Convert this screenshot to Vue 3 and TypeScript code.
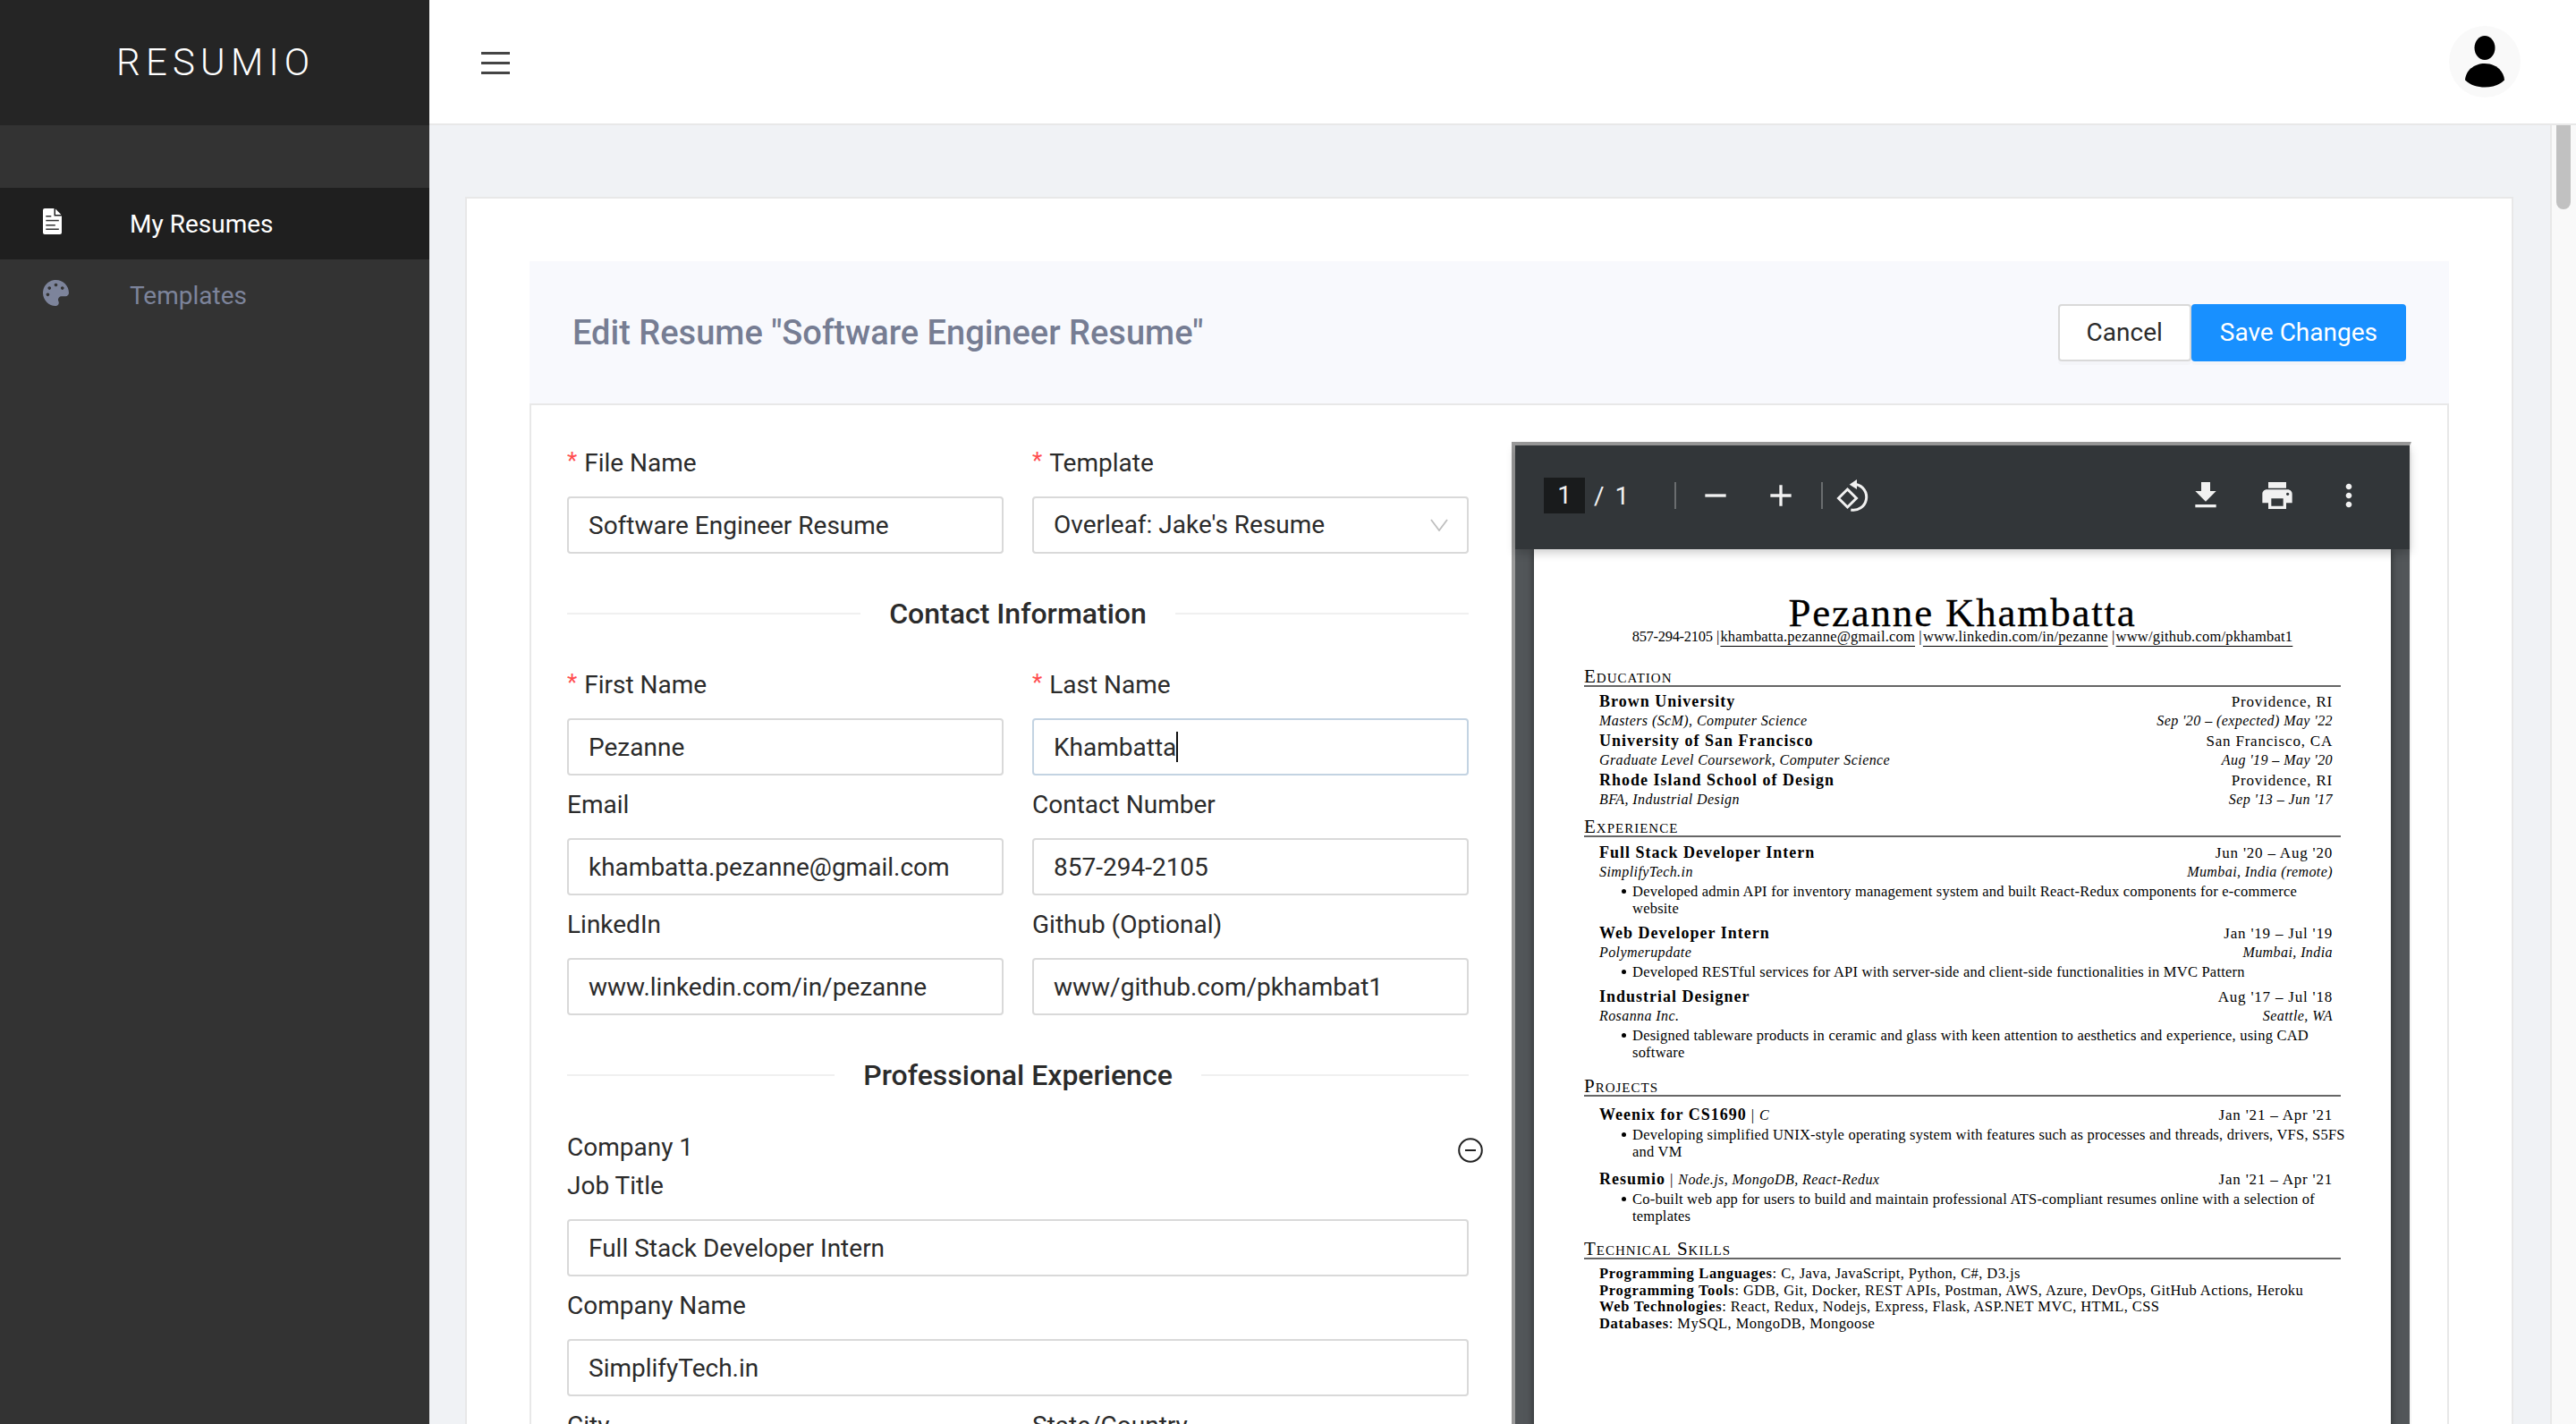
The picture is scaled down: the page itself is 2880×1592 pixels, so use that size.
<script setup lang="ts">
import { ref } from 'vue'

type Entry = {
  title: string
  tech?: string
  right: string
  sub?: string
  subRight?: string
  bullets: string[]
}

const lastName = ref('Khambatta')

const education: Entry[] = [
  { title: 'Brown University', right: 'Providence, RI', sub: 'Masters (ScM), Computer Science', subRight: "Sep '20 – (expected) May '22", bullets: [] },
  { title: 'University of San Francisco', right: 'San Francisco, CA', sub: 'Graduate Level Coursework, Computer Science', subRight: "Aug '19 – May '20", bullets: [] },
  { title: 'Rhode Island School of Design', right: 'Providence, RI', sub: 'BFA, Industrial Design', subRight: "Sep '13 – Jun '17", bullets: [] }
]

const experience: Entry[] = [
  {
    title: 'Full Stack Developer Intern', right: "Jun '20 – Aug '20", sub: 'SimplifyTech.in', subRight: 'Mumbai, India (remote)',
    bullets: ['Developed admin API for inventory management system and built React-Redux components for e-commerce website']
  },
  {
    title: 'Web Developer Intern', right: "Jan '19 – Jul '19", sub: 'Polymerupdate', subRight: 'Mumbai, India',
    bullets: ['Developed RESTful services for API with server-side and client-side functionalities in MVC Pattern']
  },
  {
    title: 'Industrial Designer', right: "Aug '17 – Jul '18", sub: 'Rosanna Inc.', subRight: 'Seattle, WA',
    bullets: ['Designed tableware products in ceramic and glass with keen attention to aesthetics and experience, using CAD software']
  }
]

const projects: Entry[] = [
  {
    title: 'Weenix for CS1690', tech: 'C', right: "Jan '21 – Apr '21",
    bullets: ['Developing simplified UNIX-style operating system with features such as processes and threads, drivers, VFS, S5FS and VM']
  },
  {
    title: 'Resumio', tech: 'Node.js, MongoDB, React-Redux', right: "Jan '21 – Apr '21",
    bullets: ['Co-built web app for users to build and maintain professional ATS-compliant resumes online with a selection of templates']
  }
]

const skills = [
  { name: 'Programming Languages', value: 'C, Java, JavaScript, Python, C#, D3.js' },
  { name: 'Programming Tools', value: 'GDB, Git, Docker, REST APIs, Postman, AWS, Azure, DevOps, GitHub Actions, Heroku' },
  { name: 'Web Technologies', value: 'React, Redux, Nodejs, Express, Flask, ASP.NET MVC, HTML, CSS' },
  { name: 'Databases', value: 'MySQL, MongoDB, Mongoose' }
]

const sections = [
  { name: 'Education', entries: education, kind: 'edu' },
  { name: 'Experience', entries: experience, kind: 'exp' },
  { name: 'Projects', entries: projects, kind: 'proj' }
]
</script>

<template>
  <div class="app">
    <aside class="sidebar">
      <div class="logo">RESUMIO</div>
      <nav class="nav">
        <a class="nav-item active">
          <svg class="nav-icon" width="21" height="29" viewBox="0 0 21 29">
            <path fill="#fff" d="M2 0h10.500v8.500h8.500V27a2 2 0 0 1-2 2H2a2 2 0 0 1-2-2V2a2 2 0 0 1 2-2z" />
            <path fill="#fff" d="M14 .6 20.400 7H14z" />
            <g fill="#333">
              <rect x="3.300" y="8" width="6" height="1.500" />
              <rect x="3.300" y="12.800" width="14.500" height="1.500" />
              <rect x="3.300" y="18" width="10.500" height="1.500" />
              <rect x="3.300" y="22.500" width="14.500" height="1.500" />
            </g>
          </svg>
          <span>My Resumes</span>
        </a>
        <a class="nav-item">
          <svg class="nav-icon" width="29" height="29" viewBox="0 0 512 512">
            <path fill="#7d849b" d="M204.300 5C104.900 24.400 24.800 104.300 5.200 203.400c-37 187 131.700 326.400 258.800 306.700 41.200-6.400 61.400-54.600 42.500-91.700-23.100-45.400 9.900-98.400 60.900-98.400h79.700c35.800 0 64.800-29.600 64.900-65.300C511.500 97.100 368.100-26.900 204.300 5zM96 320c-17.700 0-32-14.300-32-32s14.300-32 32-32 32 14.300 32 32-14.300 32-32 32zm32-128c-17.700 0-32-14.300-32-32s14.300-32 32-32 32 14.300 32 32-14.300 32-32 32zm128-64c-17.700 0-32-14.300-32-32s14.300-32 32-32 32 14.300 32 32-14.300 32-32 32zm128 64c-17.700 0-32-14.300-32-32s14.300-32 32-32 32 14.300 32 32-14.300 32-32 32z" />
          </svg>
          <span>Templates</span>
        </a>
      </nav>
    </aside>

    <div class="main">
      <header class="topbar">
        <button class="burger"><i></i><i></i><i></i></button>
        <div class="avatar">
          <svg width="46" height="58" viewBox="0 0 46 58">
            <ellipse cx="23" cy="13.500" rx="11.500" ry="13.500" fill="#000" />
            <path fill="#000" d="M23 31C11 31 1.500 39 1 49.500 7 55.500 15 57.500 23 57.500s16-2 22-8C44.500 39 35 31 23 31z" />
          </svg>
        </div>
      </header>

      <div class="scroller">
        <div class="content">
          <section class="card">
            <div class="page-head">
              <h1>Edit Resume "Software Engineer Resume"</h1>
              <div class="actions">
                <button class="btn">Cancel</button>
                <button class="btn primary">Save Changes</button>
              </div>
            </div>

            <div class="body">
              <form class="form" @submit.prevent>
                <div class="row">
                  <div class="field">
                    <label class="req">File Name</label>
                    <div class="input">Software Engineer Resume</div>
                  </div>
                  <div class="field">
                    <label class="req">Template</label>
                    <div class="input select">
                      Overleaf: Jake's Resume
                      <svg width="20" height="14" viewBox="0 0 20 14">
                        <path d="M1 1l9 12 9-12" fill="none" stroke="#bfbfbf" stroke-width="1.800" />
                      </svg>
                    </div>
                  </div>
                </div>

                <div class="divider"><span>Contact Information</span></div>

                <div class="row">
                  <div class="field">
                    <label class="req">First Name</label>
                    <div class="input">Pezanne</div>
                  </div>
                  <div class="field">
                    <label class="req">Last Name</label>
                    <div class="input focused">{{ lastName }}<span class="caret"></span></div>
                  </div>
                </div>
                <div class="row">
                  <div class="field">
                    <label>Email</label>
                    <div class="input">khambatta.pezanne@gmail.com</div>
                  </div>
                  <div class="field">
                    <label>Contact Number</label>
                    <div class="input">857-294-2105</div>
                  </div>
                </div>
                <div class="row">
                  <div class="field">
                    <label>LinkedIn</label>
                    <div class="input">www.linkedin.com/in/pezanne</div>
                  </div>
                  <div class="field">
                    <label>Github (Optional)</label>
                    <div class="input">www/github.com/pkhambat1</div>
                  </div>
                </div>

                <div class="divider"><span>Professional Experience</span></div>

                <div class="company">
                  <span>Company 1</span>
                  <svg width="28" height="28" viewBox="0 0 28 28">
                    <circle cx="14" cy="14" r="12.800" fill="none" stroke="#222" stroke-width="2" />
                    <rect x="8" y="13" width="12" height="2" fill="#222" />
                  </svg>
                </div>
                <div class="field">
                  <label>Job Title</label>
                  <div class="input">Full Stack Developer Intern</div>
                </div>
                <div class="field spaced">
                  <label>Company Name</label>
                  <div class="input">SimplifyTech.in</div>
                </div>
                <div class="row spaced">
                  <div class="field">
                    <label>City</label>
                  </div>
                  <div class="field">
                    <label>State/Country</label>
                  </div>
                </div>
              </form>

              <div class="viewer">
                <div class="toolbar">
                  <span class="page-box">1</span>
                  <span class="page-total">/ 1</span>
                  <span class="sep first"></span>
                  <svg class="tool zoom-out" viewBox="0 0 24 24"><path d="M19 13H5v-2h14v2z" /></svg>
                  <svg class="tool zoom-in" viewBox="0 0 24 24"><path d="M19 13h-6v6h-2v-6H5v-2h6V5h2v6h6v2z" /></svg>
                  <span class="sep second"></span>
                  <svg class="rotate" width="40" height="40" viewBox="0 0 40 40">
                    <path d="M12.500 13l10 10-10 10-10-10z" fill="none" stroke="#f1f1f1" stroke-width="3" />
                    <path d="M22 7.500A14.500 14.500 0 0 1 16.300 36" fill="none" stroke="#f1f1f1" stroke-width="3" />
                    <path d="M14.700 7.700 23 2v11z" fill="#f1f1f1" />
                  </svg>
                  <div class="tools-right">
                    <svg class="tool" viewBox="0 0 24 24"><path d="M19 9h-4V3H9v6H5l7 7 7-7zM5 18v2h14v-2H5z" /></svg>
                    <svg class="tool" viewBox="0 0 24 24"><path d="M19 8H5c-1.660 0-3 1.340-3 3v6h4v4h12v-4h4v-6c0-1.660-1.340-3-3-3zm-3 11H8v-5h8v5zm3-7c-.55 0-1-.45-1-1s.45-1 1-1 1 .45 1 1-.45 1-1 1zm-1-9H6v4h12V3z" /></svg>
                    <svg class="tool" viewBox="0 0 24 24"><path d="M12 8c1.100 0 2-.9 2-2s-.9-2-2-2-2 .9-2 2 .9 2 2 2zm0 2c-1.100 0-2 .9-2 2s.9 2 2 2 2-.9 2-2-.9-2-2-2zm0 6c-1.100 0-2 .9-2 2s.9 2 2 2 2-.9 2-2-.9-2-2-2z" /></svg>
                  </div>
                </div>

                <div class="pdf-wrap">
                  <article class="pdf-page">
                    <div class="cv-name">Pezanne Khambatta</div>
                    <div class="cv-contact">
                      <span class="phone">857-294-2105</span> |<u>khambatta.pezanne@gmail.com</u> |<u>www.linkedin.com/in/pezanne</u> |<u>www/github.com/pkhambat1</u>
                    </div>

                    <section v-for="s in sections" :key="s.name" class="cv-section" :class="s.kind">
                      <h3>{{ s.name }}</h3>
                      <div v-for="e in s.entries" :key="e.title" class="cv-entry">
                        <div class="cv-line">
                          <span><b>{{ e.title }}</b><template v-if="e.tech"> | <em>{{ e.tech }}</em></template></span>
                          <span>{{ e.right }}</span>
                        </div>
                        <div v-if="e.sub" class="cv-line">
                          <em>{{ e.sub }}</em>
                          <em>{{ e.subRight }}</em>
                        </div>
                        <ul v-if="e.bullets.length">
                          <li v-for="b in e.bullets" :key="b">{{ b }}</li>
                        </ul>
                      </div>
                    </section>

                    <section class="cv-section skills">
                      <h3>Technical Skills</h3>
                      <div class="cv-skills">
                        <div v-for="sk in skills" :key="sk.name"><b>{{ sk.name }}</b>: {{ sk.value }}</div>
                      </div>
                    </section>
                  </article>
                </div>
              </div>
            </div>
          </section>
        </div>
        <div class="scrollbar"><div class="thumb"></div></div>
      </div>
    </div>
  </div>
</template>

<style>
html, body { margin: 0; height: 100%; overflow: hidden; }
</style>

<style scoped>
.app {
  display: flex;
  height: 1592px;
  overflow: hidden;
  font-family: Roboto, sans-serif;
  color: #2b2b2b;
}

/* sidebar */
.sidebar { width: 480px; flex: none; background: #333; }
.logo {
  height: 140px;
  background: #252525;
  color: #fff;
  font-size: 42px;
  font-weight: 300;
  letter-spacing: 6.200px;
  line-height: 140px;
  padding-left: 130px;
  box-sizing: border-box;
}
.nav { margin-top: 70px; }
.nav-item {
  display: flex;
  align-items: center;
  height: 80px;
  padding-left: 48px;
  color: #7d849b;
  font-size: 28px;
}
.nav-item.active { background: #1f1f1f; color: #fff; }
.nav-item span { position: absolute; left: 145px; }
.nav-icon { margin-top: -5px; }

/* top bar */
.main { flex: 1; display: flex; flex-direction: column; min-width: 0; }
.topbar {
  height: 140px;
  flex: none;
  box-sizing: border-box;
  background: #fff;
  border-bottom: 2px solid #e8e8e8;
  display: flex;
  align-items: center;
  justify-content: space-between;
  padding: 0 62px 0 58px;
}
.burger {
  display: flex;
  flex-direction: column;
  gap: 8px;
  width: 32px;
  padding: 0;
  margin-top: 3px;
  border: 0;
  background: none;
}
.burger i { display: block; height: 3px; background: #444; }
.avatar {
  width: 80px;
  height: 80px;
  border-radius: 50%;
  background: #f9f9f9;
  display: flex;
  align-items: center;
  justify-content: center;
}

.scroller { flex: 1; display: flex; min-height: 0; background: #f0f2f5; overflow: hidden; }
.content { flex: 1; min-width: 0; padding: 80px 41px 0 40px; }
.scrollbar {
  width: 29px;
  flex: none;
  box-sizing: border-box;
  background: #f9f9f9;
  border-left: 2px solid #e8e8e8;
  padding: 0 6px 0 5px;
}
.thumb { height: 94px; background: #c1c1c1; border-radius: 0 0 8px 8px; }

/* card */
.card {
  background: #fff;
  border: 2px solid #e8e8e8;
  padding: 70px 70px 0;
}
.page-head {
  height: 161px;
  box-sizing: border-box;
  background: #f8f9fd;
  border-bottom: 2px solid #e8e8e8;
  display: flex;
  align-items: center;
  justify-content: space-between;
  padding: 0 48px;
}
.page-head h1 {
  margin: 0;
  font-size: 38px;
  font-weight: 500;
  color: #767d93;
}
.actions { display: flex; }
.btn {
  height: 64px;
  padding: 0 30px;
  font: 400 28px Roboto, sans-serif;
  color: #2b2b2b;
  background: #fff;
  border: 2px solid #d9d9d9;
  border-radius: 4px;
  box-shadow: 0 4px 0 rgba(0, 0, 0, 0.015);
}
.btn.primary { background: #1890ff; border-color: #1890ff; color: #fff; }

.body {
  display: flex;
  gap: 48px;
  padding: 41px 40px 0;
  border-left: 2px solid #e8e8e8;
  border-right: 2px solid #e8e8e8;
}

/* form */
.form { width: 1008px; flex: none; font-size: 28px; padding-top: 1px; }
.row { display: grid; grid-template-columns: 488px 488px; gap: 32px; margin-bottom: 10px; }
.field label { display: block; height: 44px; line-height: 46px; margin-bottom: 16px; }
.field label.req::before { content: '*'; color: #ff4d4f; margin-right: 8px; position: relative; top: -3px; font-size: 26px; }
.spaced { margin-top: 10px; }
.input {
  position: relative;
  height: 64px;
  box-sizing: border-box;
  border: 2px solid #d9d9d9;
  border-radius: 4px;
  padding: 0 22px;
  line-height: 62px;
  white-space: nowrap;
}
.input.focused { border-color: #c3d3e2; }
.caret { display: inline-block; width: 2px; height: 34px; background: #111; vertical-align: -7px; }
.select { display: flex; align-items: center; justify-content: space-between; }
.select svg { margin-right: -1px; }
.divider {
  display: flex;
  align-items: center;
  height: 42px;
  margin: 46px 0 36px;
  font-size: 32px;
  font-weight: 500;
}
.divider::before, .divider::after { content: ''; flex: 1; height: 2px; background: #f0f0f0; }
.divider span { padding: 0 32px; }
.company { display: flex; justify-content: space-between; align-items: flex-start; height: 44px; line-height: 48px; }
.company svg { margin: 13px -16px 0 0; }

/* pdf viewer */
.viewer {
  width: 1006px;
  flex: none;
  box-sizing: border-box;
  border-top: 4px solid #9a9a9a;
  border-left: 4px solid #9a9a9a;
  border-right: 2px solid #f4f4f4;
  background: #525659;
  height: 1200px;
}
.toolbar {
  position: relative;
  z-index: 1;
  height: 116px;
  box-sizing: border-box;
  background: #323639;
  box-shadow: 0 4px 10px rgba(0, 0, 0, 0.2);
  display: flex;
  align-items: center;
  padding: 0 48px 4px 32px;
  color: #f1f1f1;
  font-size: 28px;
}
.page-box { width: 46px; height: 40px; line-height: 40px; text-align: center; background: #191b1c; }
.page-total { margin-left: 10px; word-spacing: 5px; }
.sep { width: 2px; height: 30px; background: #6a6d6f; }
.sep.first { margin-left: 51px; }
.sep.second { margin-left: 25px; }
.tool { width: 40px; height: 40px; fill: #f1f1f1; flex: none; }
.zoom-out { margin-left: 24px; }
.zoom-in { margin-left: 33px; }
.rotate { margin-left: 15px; }
.tools-right { margin-left: auto; display: flex; gap: 40px; }

.pdf-wrap { padding: 0 21px; }
.pdf-page {
  background: #fff;
  height: 1200px;
  box-shadow: 0 0 8px rgba(0, 0, 0, 0.5);
  box-sizing: border-box;
  padding: 54px 56px 0;
  font-family: 'Liberation Serif', serif;
  color: #000;
}
.cv-name { height: 34px; line-height: 34px; text-align: center; font-size: 45px; letter-spacing: 1.800px; -webkit-text-stroke: 0.3px #000; }
.cv-contact { height: 20px; line-height: 20px; text-align: center; font-size: 16.500px; letter-spacing: 0.2px; white-space: nowrap; }
.cv-contact .phone { letter-spacing: -0.3px; }
.cv-contact u { text-underline-offset: 5px; margin-left: 1px; }
.cv-section h3 {
  margin: 0;
  height: 20px;
  line-height: 20px;
  font-size: 21px;
  font-weight: 400;
  font-variant: small-caps;
  border-bottom: 2px solid #666;
  box-sizing: content-box;
  letter-spacing: 1px;
}
.cv-section { margin-top: 18px; }
.cv-section.edu { margin-top: 24px; }
.cv-section.exp { margin-top: 10.500px; }
.cv-section.skills { margin-top: 17px; }
.cv-entry { margin: 8px 9px 0 17px; }
.edu .cv-entry { margin-top: 2px; }
.edu .cv-entry:first-of-type { margin-top: 5.500px; }
.exp .cv-entry:first-of-type { margin-top: 7px; }
.proj .cv-entry { margin-top: 11.500px; }
.proj .cv-entry:first-of-type { margin-top: 9.500px; }
.cv-line { display: flex; justify-content: space-between; height: 21px; line-height: 21px; white-space: nowrap; font-size: 17px; letter-spacing: 0.800px; }
.cv-line b { font-size: 18px; letter-spacing: 1px; }
.cv-line em { font-size: 16px; letter-spacing: 0.42px; }
.cv-entry ul { margin: 2px -14px 0 0; padding: 0 0 0 37px; list-style: none; line-height: 19px; font-size: 16.500px; letter-spacing: 0.22px; }
.cv-entry li { position: relative; }
.cv-entry li::before { content: ''; position: absolute; left: -12px; top: 7px; width: 5px; height: 5px; border-radius: 50%; background: #000; }
.cv-skills { margin: 7px 9px 0 17px; line-height: 18.700px; font-size: 16.500px; letter-spacing: 0.420px; white-space: nowrap; }
.cv-skills b { letter-spacing: 0.700px; }
</style>
